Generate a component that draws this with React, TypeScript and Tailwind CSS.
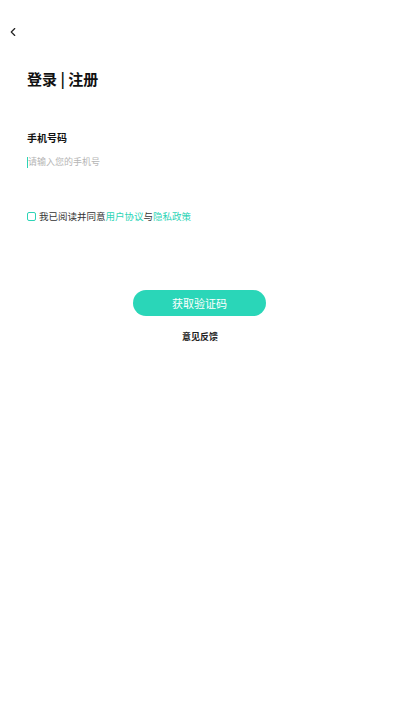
import { ChevronLeft } from 'lucide-react';

const font = { fontFamily: '"Noto Sans CJK SC", "Noto Sans", sans-serif' };

export default function App() {
  return (
    <main className="flex min-h-[711px] w-full flex-col bg-white text-[#111]" style={font}>
      <div className="flex h-[68px] items-start pt-[25px] pl-[6px]">
        <ChevronLeft className="h-[14px] w-[14px] text-[#222]" strokeWidth={2} />
      </div>

      <section className="px-[27px]">
        <h1 className="text-[15px] leading-[22px] font-bold">登录 | 注册</h1>

        <label className="mt-[41px] block text-[10px] leading-[14px] font-bold">手机号码</label>
        <div className="mt-[11px] flex items-center">
          <span className="h-[11px] w-[1px] bg-[#2dd4b6]" />
          <input
            className="w-full bg-transparent text-[9px] leading-[12px] outline-none placeholder:text-[#b5b5b5]"
            placeholder="请输入您的手机号"
          />
        </div>

        <div className="mt-[42px] flex items-center gap-[3px] text-[9.5px] leading-[12px]">
          <span className="h-[9px] w-[9px] rounded-[2px] border border-[#2dd4b6]" />
          <span className="text-[#333]">
            我已阅读并同意<span className="text-[#2dd4b6]">用户协议</span>与<span className="text-[#2dd4b6]">隐私政策</span>
          </span>
        </div>
      </section>

      <div className="mt-[68px] flex flex-col items-center">
        <button className="ml-[-1px] h-[26px] w-[133px] rounded-full bg-[#2ad6b8] text-[11px] text-white">获取验证码</button>
        <span className="mt-[15px] text-[9px] leading-[11px] font-bold text-[#222]">意见反馈</span>
      </div>
    </main>
  );
}
